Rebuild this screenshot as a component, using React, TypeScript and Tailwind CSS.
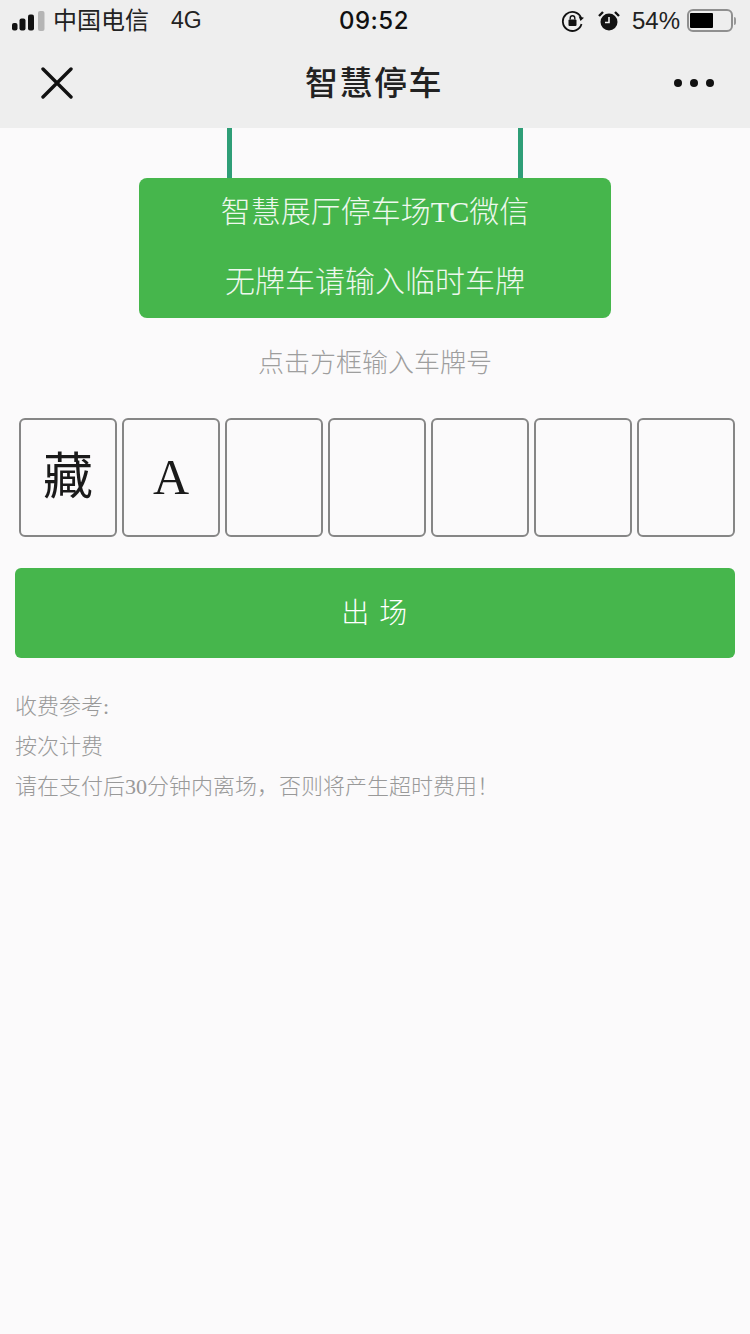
import React from "react";

const plate = ["藏", "A", "", "", "", "", ""];

function StatusBar() {
  return (
    <div className="flex h-[40px] items-center justify-between pl-[12px] pr-[14px] pt-[1px] text-[#222]">
      <div className="flex w-[300px] items-center">
        <svg width="34" height="20" viewBox="0 0 34 20" className="mr-[7px]">
          <rect x="0" y="12" width="5.5" height="7.5" rx="2" fill="#111" />
          <rect x="7.5" y="7.5" width="6" height="12" rx="2" fill="#111" />
          <rect x="16" y="3.5" width="6" height="16" rx="2" fill="#111" />
          <rect x="26" y="0" width="6.5" height="20" rx="2" fill="#b5b5b5" />
        </svg>
        <span className="text-[24px] leading-none">中国电信</span>
        <span className="ml-[22px] text-[23px] leading-none">4G</span>
      </div>
      <div className="font-['Inter'] text-[24px] font-medium leading-none tracking-[0.5px] text-[#111]">09:52</div>
      <div className="flex w-[300px] items-center justify-end">
        <svg width="24" height="24" viewBox="0 0 24 24" className="mr-[13px]">
          <path d="M20 8.5A9.5 9.5 0 1 0 20.5 15" fill="none" stroke="#111" strokeWidth="1.8" />
          <path d="M17 8h5.5l-2.5 4z" fill="#111" transform="rotate(15 20 10)" />
          <rect x="7.5" y="10.5" width="8" height="6.5" rx="1" fill="#111" />
          <path d="M9.2 10.5V9a2.3 2.3 0 0 1 4.6 0v1.5" fill="none" stroke="#111" strokeWidth="1.4" />
        </svg>
        <svg width="22" height="22" viewBox="0 0 22 22" className="mr-[12px]">
          <circle cx="11" cy="12" r="8.5" fill="#111" />
          <path d="M11 7v5.5H7" fill="none" stroke="#eee" strokeWidth="1.6" />
          <path d="M1 6l4-4M21 6l-4-4" stroke="#111" strokeWidth="2.4" />
        </svg>
        <span className="mr-[7px] text-[24px] leading-none">54%</span>
        <div className="h-[23px] w-[46px] rounded-[6px] border-2 border-[#8f8f8f] px-[1px] py-[2px]">
          <div className="h-full w-[23px] rounded-[1px] bg-black" />
        </div>
        <div className="ml-[1px] h-[8px] w-[2px] rounded-r-full bg-[#999]" />
      </div>
    </div>
  );
}

function NavBar() {
  return (
    <div className="flex h-[88px] items-center justify-between pb-[2px] pl-[41px] pr-[36px]">
      <svg width="32" height="32" viewBox="0 0 32 32">
        <path d="M2 2l28 28M30 2L2 30" stroke="#111" strokeWidth="3.4" strokeLinecap="round" />
      </svg>
      <div className="ml-[1px] text-[33px] font-medium leading-none tracking-[1.5px] text-[#222]">智慧停车</div>
      <div className="flex gap-[8px]">
        <div className="h-[8px] w-[8px] rounded-full bg-[#111]" />
        <div className="h-[8px] w-[8px] rounded-full bg-[#111]" />
        <div className="h-[8px] w-[8px] rounded-full bg-[#111]" />
      </div>
    </div>
  );
}

export default function App() {
  return (
    <div
      className="min-h-[1334px] bg-[#fbfafb]"
      style={{ fontFamily: '"Liberation Serif", "Noto Sans CJK SC", serif' }}
    >
      <div
        className="bg-[#eeeeee]"
        style={{ fontFamily: '"Liberation Sans", "Noto Sans CJK SC", sans-serif' }}
      >
        <StatusBar />
        <NavBar />
      </div>

      {/* hanging sign */}
      <div className="flex flex-col items-center">
        <div className="flex h-[50px] w-[296px] justify-between">
          <div className="w-[5px] bg-[#2f9e77]" />
          <div className="w-[5px] bg-[#2f9e77]" />
        </div>
        <div className="flex h-[140px] w-[472px] flex-col items-center rounded-[8px] bg-[#46b64c] text-[30px] font-light leading-[70px] text-[#eef8ee]">
          <div className="-mt-[1px]">智慧展厅停车场TC微信</div>
          <div>无牌车请输入临时车牌</div>
        </div>
      </div>

      <div className="mt-[28px] text-center text-[26px] font-light leading-[36px] text-[#9e9e9e]">点击方框输入车牌号</div>

      <div className="mt-[36px] flex gap-[5px] pl-[19px] pr-[15px]">
        {plate.map((c, i) => (
          <div
            key={i}
            className="flex h-[119px] flex-1 items-center justify-center rounded-[6px] border-2 border-[#868686] text-[50px] text-[#1a1a1a]"
          >
            {c}
          </div>
        ))}
      </div>

      <div className="mx-[15px] mt-[31px] flex h-[90px] items-center justify-center rounded-[6px] bg-[#46b64c] pt-[2px] text-[28px] font-light tracking-[1.5px] text-white">
        出 场
      </div>

      <div className="mt-[29px] px-[15px] text-[22px] font-light leading-[40px] text-[#999999]">
        <div>收费参考:</div>
        <div>按次计费</div>
        <div>请在支付后30分钟内离场，否则将产生超时费用！</div>
      </div>
    </div>
  );
}
